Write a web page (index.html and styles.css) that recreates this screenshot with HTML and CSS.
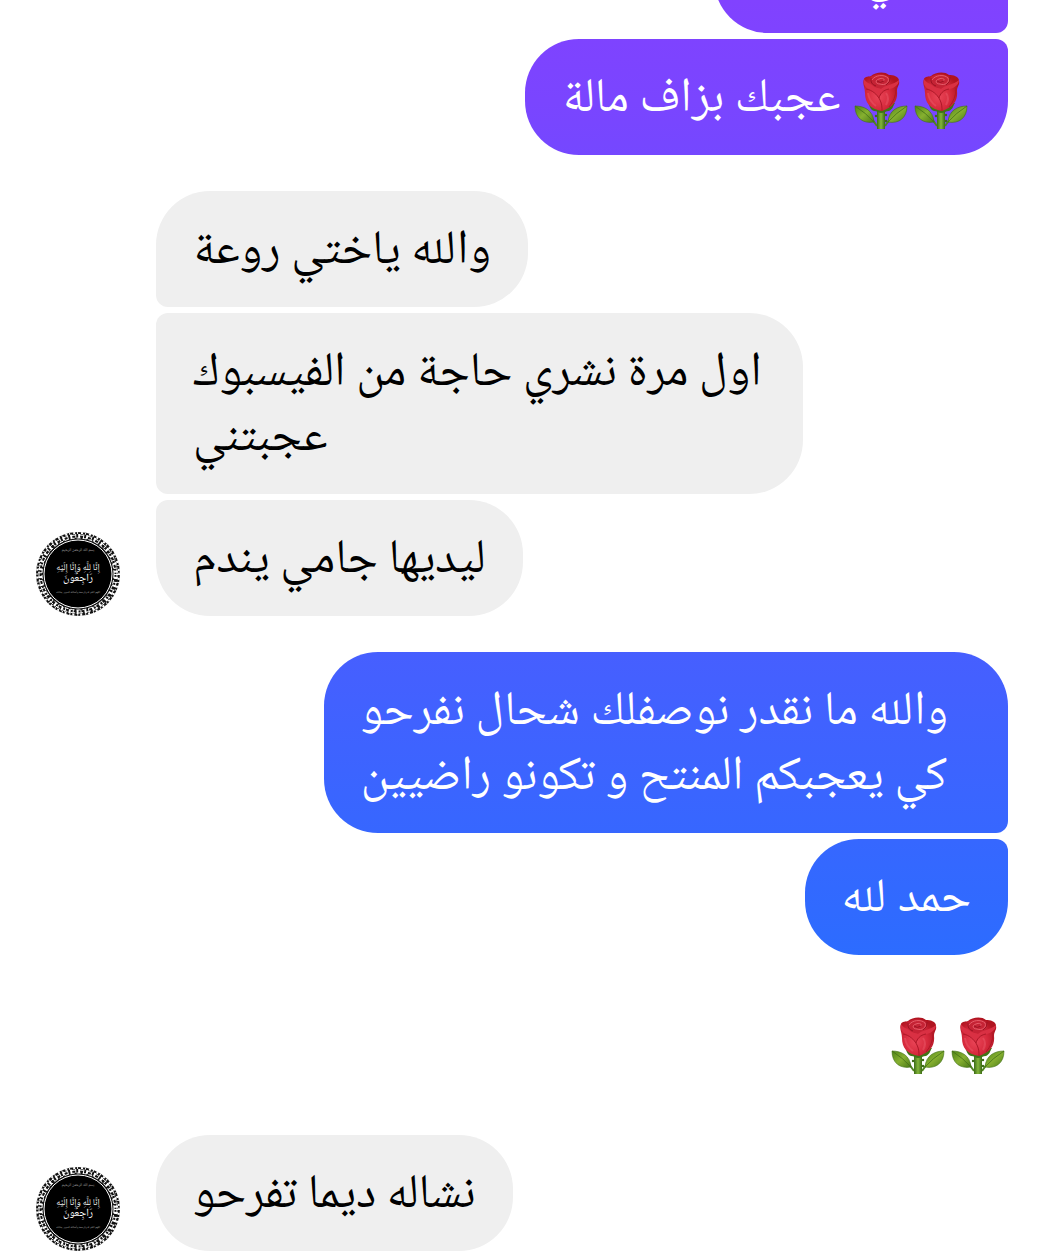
FILE: index.html
```html
<!DOCTYPE html>
<html lang="ar">
<head>
<meta charset="utf-8">
<meta name="viewport" content="width=device-width, initial-scale=1">
<title>محادثة</title>
<link rel="stylesheet" href="styles.css">
</head>
<body>
<svg class="defs" aria-hidden="true">
  <defs>
    <radialGradient id="petal" cx=".42" cy=".62" r=".6">
      <stop offset="0" stop-color="#ea4658"/>
      <stop offset=".55" stop-color="#d62a3d"/>
      <stop offset="1" stop-color="#b01420"/>
    </radialGradient>
    <linearGradient id="stem" x1="0" x2="1" y1="0" y2="0">
      <stop offset="0" stop-color="#3c6b16"/>
      <stop offset=".5" stop-color="#83b53a"/>
      <stop offset="1" stop-color="#3c6b16"/>
    </linearGradient>
    <linearGradient id="leaf" x1="0" x2="1" y1="0" y2="1">
      <stop offset="0" stop-color="#4f8418"/>
      <stop offset=".5" stop-color="#86b030"/>
      <stop offset="1" stop-color="#4a7a18"/>
    </linearGradient>
    <symbol id="rose" viewBox="0 0 60 57">
      <path d="M26 54L21 47M34 54L39 47" stroke="#4f8420" stroke-width="2" fill="none"/>
      <path d="M26 37H34V57H26Z" fill="url(#stem)"/>
      <circle cx="25" cy="44" r="1.200" fill="#3c6b16"/><circle cx="35" cy="43" r="1.200" fill="#3c6b16"/><circle cx="35" cy="49" r="1.200" fill="#3c6b16"/>
      <path d="M4 34C13 34 22 38 23 50C12 52 4 46 4 34Z" fill="url(#leaf)" stroke="#3f7014" stroke-width=".6"/>
      <path d="M56 34C47 34 38 38 37 50C48 52 56 46 56 34Z" fill="url(#leaf)" stroke="#3f7014" stroke-width=".6"/>
      <path d="M4 34Q15 41 23 50M56 34Q45 41 37 50" stroke="#426f18" stroke-width=".8" fill="none"/>
      <path d="M17 31C19 33 18 37 23 39C26 39 28 41 30 41C33 41 35 39 38 39C42 37 42 34 44 31Z" fill="#3f7417"/>
      <path d="M13 7C14 4 18 5 20 4C24 0 34 -1 38 3C42 3 48 4 48 9C49 13 46 14 46 19C47 28 43 35 31 39C19 37 14 31 14 21C14 15 11 12 13 7Z" fill="url(#petal)"/>
      <path d="M19 6C24 1 34 1 39 6C41 12 36 16 30 17C24 16 18 13 19 6Z" fill="#c52335"/>
      <path d="M13 7C15 11 19 11 22 14C25 17 28 16 30 17C34 13 42 13 48 8C48 13 43 16 39 17C34 18 30 22 28 26C24 20 20 17 16 16C13 14 12 11 13 7Z" fill="#d93043"/>
      <path d="M21 8C24 3 33 2 37 6C39 10 34 14 29 12C24 12 24 8 28 7C32 5 35 8 32 9" fill="none" stroke="#e65c69" stroke-width="1"/>
      <path d="M26 9Q29 12 33 9M20 6Q19 12 25 14M39 5Q40 10 35 13" fill="none" stroke="#9c1222" stroke-width="1"/>
      <path d="M15 17C21 18 26 22 29 28C31 32 31 36 31 39M38 17C32 18 29 22 28 26M45 16Q45 27 38 35" fill="none" stroke="#ad1828" stroke-width="1"/>
      <path d="M17 21Q18 29 25 34M35 21Q39 26 35 33" fill="none" stroke="#f06a78" stroke-width="2" opacity=".35"/>
    </symbol>
    <symbol id="avatar" viewBox="0 0 84 84">
      <circle cx="42" cy="42" r="42" fill="#111"/>
      <circle cx="42" cy="42" r="41" fill="none" stroke="#fff" stroke-width="2" stroke-dasharray="1 3 2 2"/>
      <circle cx="42" cy="42" r="38" fill="none" stroke="#fff" stroke-width="4" stroke-dasharray="1 2 2 3"/>
      <circle cx="42" cy="42" r="39" fill="none" stroke="#fff" stroke-width="1" stroke-dasharray="5 3"/>
      <circle cx="42" cy="42" r="36" fill="none" stroke="#fff" stroke-width="1" stroke-dasharray="4 2"/>
      <circle cx="42" cy="42" r="34" fill="#000" stroke="#fff" stroke-width="1"/>
      <g class="avatar-text" text-anchor="middle" fill="#fff">
        <text x="42" y="19" font-size="4" opacity=".6">بسم الله الرحمن الرحيم</text>
        <text x="42" y="38" font-size="9">إِنَّا لِلَّهِ وَإِنَّا إِلَيْهِ</text>
        <text x="42" y="49" font-size="11">رَاجِعُونَ</text>
        <text x="42" y="61" font-size="3" opacity=".6">اللهم اغفر له وارحمه وأسكنه فسيح جناتك</text>
      </g>
    </symbol>
  </defs>
</svg>
<main class="chat">
  <section class="group sent cut">
    <p class="bubble">عيشي الغالية</p>
    <p class="bubble">عجبك بزاف مالة <span class="roses" role="img" aria-label="وردتان"><svg class="rose"><use href="#rose"/></svg><svg class="rose"><use href="#rose"/></svg></span></p>
  </section>
  <section class="group received">
    <svg class="avatar" role="img" aria-label="صورة المرسل"><use href="#avatar"/></svg>
    <div class="stack">
      <p class="bubble">والله ياختي روعة</p>
      <p class="bubble wrapped">اول مرة نشري حاجة من الفيسبوك<br>عجبتني</p>
      <p class="bubble">ليديها جامي يندم</p>
    </div>
  </section>
  <section class="group sent">
    <p class="bubble wrapped">والله ما نقدر نوصفلك شحال نفرحو<br>كي يعجبكم المنتح و تكونو راضيين</p>
    <p class="bubble">حمد لله</p>
  </section>
  <section class="group sent emoji">
    <span class="roses" role="img" aria-label="وردتان"><svg class="rose"><use href="#rose"/></svg><svg class="rose"><use href="#rose"/></svg></span>
  </section>
  <section class="group received">
    <svg class="avatar" role="img" aria-label="صورة المرسل"><use href="#avatar"/></svg>
    <div class="stack">
      <p class="bubble">نشاله ديما تفرحو</p>
    </div>
  </section>
</main>
</body>
</html>
```
FILE: styles.css
```css
* {
  box-sizing: border-box;
}

body {
  margin: 0;
  background: #fff;
  color: #000;
  font-family: "Noto Naskh Arabic UI", "Noto Naskh Arabic", "DejaVu Sans", sans-serif;
  overflow: hidden;
}

.defs {
  position: absolute;
  width: 0;
  height: 0;
}

.chat {
  display: flex;
  flex-direction: column;
  gap: 36px;
  padding: 0 45px 8px 36px;
}

.group {
  display: flex;
}

/* the thread is scrolled, so its first message runs off the top */
.cut {
  margin-top: -83px;
}

.sent {
  flex-direction: column;
  align-items: flex-end;
  gap: 6px;
}

.received {
  align-items: flex-end;
  gap: 36px;
}

.stack {
  display: flex;
  flex-direction: column;
  align-items: flex-start;
  gap: 6px;
}

.bubble {
  margin: 0;
  padding: 27px 37px 24px;
  border-radius: 54px;
  font-size: 48px;
  line-height: 65px;
  text-align: left;
}

/* one gradient runs behind all sent messages, top to bottom of the window */
.sent .bubble {
  color: #fff;
  background: linear-gradient(#8142ff, #7a45ff 8%, #465fff 52%, #2c6cff 76%, #1a74ff) fixed;
}

.sent .bubble:not(:last-child) {
  border-bottom-right-radius: 12px;
}

.sent .bubble:not(:first-child) {
  border-top-right-radius: 12px;
}

.sent .wrapped {
  padding-right: 60px;
}

.received .wrapped {
  padding-right: 41px;
}

.received .bubble {
  background: #efefef;
}

.received .bubble:not(:last-child) {
  border-bottom-left-radius: 12px;
}

.received .bubble:not(:first-child) {
  border-top-left-radius: 12px;
}

.roses {
  display: inline-flex;
  vertical-align: -12px;
}

.rose {
  width: 60px;
  height: 57px;
}

.emoji {
  padding: 26px 0 25px;
}

.avatar {
  flex: none;
  width: 84px;
  height: 84px;
}

.avatar-text {
  font-family: "Noto Naskh Arabic", "DejaVu Sans", sans-serif;
}
```
